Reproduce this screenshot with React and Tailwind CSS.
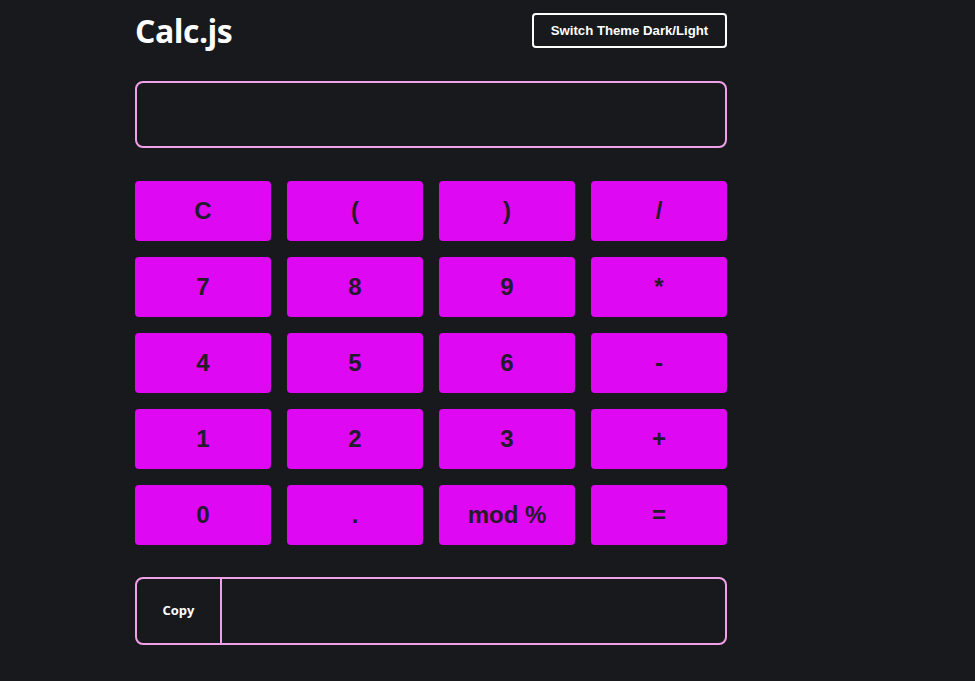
export default function App() {
  const keys = ["C", "(", ")", "/", "7", "8", "9", "*", "4", "5", "6", "-", "1", "2", "3", "+", "0", ".", "mod %", "="];
  return (
    <div className="min-h-[681px] w-full bg-[#18191d]" style={{ fontFamily: '"Liberation Sans", Arial, sans-serif' }}>
      <div className="ml-[135px] w-[592px] pt-[13px]">
        <div className="flex items-center justify-between h-[35px]">
          <h1 className="text-[32px] leading-none font-bold text-white tracking-[-0.5px]" style={{ fontFamily: '"Open Sans", "Noto Sans", sans-serif' }}>Calc.js</h1>
          <button className="h-[35px] w-[195px] rounded-[4px] border-2 border-white text-[13.2px] font-bold text-white bg-transparent">Switch Theme Dark/Light</button>
        </div>
        <div className="mt-[33px] h-[67px] rounded-[8px] border-2 border-[#f0a0e6]"></div>
        <div className="mt-[33px] grid grid-cols-4 gap-4">
          {keys.map((k) => (
            <button key={k} className="h-[60px] rounded-[4px] bg-[#de09f2] text-[24px] font-bold text-[#231a2c]">{k}</button>
          ))}
        </div>
        <div className="mt-[32px] h-[68px] rounded-[8px] border-2 border-[#f0a0e6] flex">
          <div className="w-[85px] border-r-2 border-[#f0a0e6] flex items-center justify-center text-[13px] font-bold text-white" style={{ fontFamily: '"Open Sans", "Noto Sans", sans-serif' }}>Copy</div>
          <div className="flex-1"></div>
        </div>
      </div>
    </div>
  );
}
